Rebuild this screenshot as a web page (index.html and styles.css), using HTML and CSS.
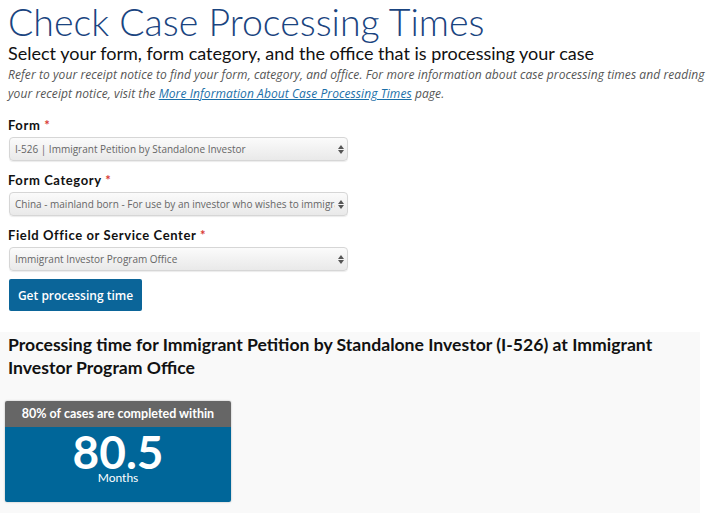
FILE: index.html
```html
<!DOCTYPE html>
<html lang="en">
<head>
  <meta charset="UTF-8">
  <title>Check Case Processing Times</title>
  <link rel="stylesheet" href="styles.css">
</head>
<body>

  <h1>Check Case Processing Times</h1>
  <h2 class="subtitle">Select your form, form category, and the office that is processing your case</h2>
  <p class="intro">Refer to your receipt notice to find your form, category, and office. For more information about case processing times and reading your receipt notice, visit the <a href="#">More Information About Case Processing Times</a> page.</p>

  <form class="lookup">
    <label class="field">
      <span class="field-label">Form <span class="req">*</span></span>
      <span class="select">
        <span class="select-text">I-526 | Immigrant Petition by Standalone Investor</span>
        <span class="arrows"></span>
      </span>
    </label>

    <label class="field">
      <span class="field-label">Form Category <span class="req">*</span></span>
      <span class="select">
        <span class="select-text">China - mainland born - For use by an investor who wishes to immigrate to the United States</span>
        <span class="arrows"></span>
      </span>
    </label>

    <label class="field">
      <span class="field-label">Field Office or Service Center <span class="req">*</span></span>
      <span class="select">
        <span class="select-text">Immigrant Investor Program Office</span>
        <span class="arrows"></span>
      </span>
    </label>

    <button type="button" class="btn">Get processing time</button>
  </form>

  <section class="result">
    <h3>Processing time for Immigrant Petition by Standalone Investor (I-526) at Immigrant Investor Program Office</h3>

    <div class="card">
      <div class="card-head">80% of cases are completed within</div>
      <div class="card-body">
        <div class="value">80.5</div>
        <div class="unit">Months</div>
      </div>
    </div>
  </section>

</body>
</html>
```

FILE: styles.css
```css
body {
  margin: 0;
  padding: 0 0 0 8px;
  font-family: Lato, "Open Sans", sans-serif;
  color: #1b1b1b;
  background: #fff;
  overflow: hidden;
}

h1 {
  margin: 2px 0 0;
  font-size: 37.5px;
  font-weight: 300;
  line-height: 40px;
  color: #1a4480;
}

.subtitle {
  margin: 0;
  font-size: 18px;
  font-weight: 400;
  line-height: 22px;
  color: #111;
}

.intro {
  margin: 1px 0 0;
  font-family: "Open Sans", sans-serif;
  font-size: 12px;
  font-style: italic;
  letter-spacing: 0.08px;
  line-height: 19px;
  color: #555;
}

.intro a {
  color: #1b6fa8;
}

.lookup {
  margin-top: 13px;
}

.field {
  display: block;
  margin-bottom: 10px;
}

.field-label {
  display: block;
  font-size: 13px;
  font-weight: 700;
  letter-spacing: 0.6px;
  line-height: 18px;
  margin-bottom: 3px;
  color: #111;
}

.req {
  color: #d83933;
}

.select {
  display: flex;
  align-items: center;
  width: 339px;
  height: 24px;
  margin-left: 1px;
  box-sizing: border-box;
  padding: 0 6px 0 5px;
  border: 1px solid #d6d6d6;
  border-radius: 4px;
  background: linear-gradient(#fbfbfb, #e9e9e9);
  box-shadow: 0 1px 1px rgba(0, 0, 0, 0.08);
}

.select-text {
  flex: 1;
  overflow: hidden;
  white-space: nowrap;
  font-family: "Open Sans", sans-serif;
  font-size: 10px;
  color: #666;
}

.arrows {
  width: 0;
  height: 9px;
  margin-left: 6px;
  position: relative;
}

.arrows::before,
.arrows::after {
  content: "";
  position: absolute;
  left: -3px;
  border-left: 3px solid transparent;
  border-right: 3px solid transparent;
}

.arrows::before {
  top: 0;
  border-bottom: 4px solid #555;
}

.arrows::after {
  bottom: 0;
  border-top: 4px solid #555;
}

.btn {
  margin: -2px 0 0 1px;
  width: 133px;
  height: 32px;
  border: 0;
  border-radius: 2px;
  background: #0b6599;
  color: #fff;
  font-family: "Open Sans", sans-serif;
  font-size: 12px;
  font-weight: 600;
}

.result {
  margin: 21px 0 0 -8px;
  width: 700px;
  height: 185px;
  background: #f9f9f9;
  padding: 1px 0 0 8px;
  box-sizing: border-box;
}

.result h3 {
  margin: 0;
  font-size: 17.6px;
  font-weight: 700;
  line-height: 23px;
  color: #111;
}

.card {
  margin: 22px 0 0 -3px;
  width: 226px;
  border-radius: 2px;
  overflow: hidden;
  box-shadow: 0 0 2px rgba(0, 0, 0, 0.3);
}

.card-head {
  background: #666;
  color: #fff;
  font-size: 12.5px;
  font-weight: 700;
  text-align: center;
  height: 26px;
  line-height: 26px;
}

.card-body {
  background: #006699;
  color: #fff;
  text-align: center;
  height: 75px;
  padding-top: 5px;
  box-sizing: border-box;
}

.value {
  font-size: 46px;
  font-weight: 700;
  line-height: 40px;
}

.unit {
  font-size: 12px;
  line-height: 12px;
}
```
